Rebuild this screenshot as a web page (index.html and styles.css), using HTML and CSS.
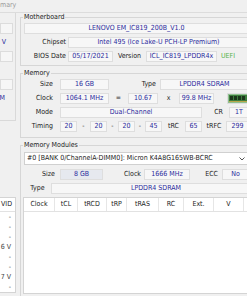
FILE: index.html
```html
<!DOCTYPE html>
<html lang="en">
<head>
    <meta charset="UTF-8">
    <meta name="viewport" content="width=device-width, initial-scale=1.0">
    <title>System Summary</title>
    <link rel="stylesheet" href="styles.css">
</head>
<body>
    <div class="titlebar">
        <div class="title">mary</div>
    </div>

    <div class="page">
        <!-- cpu side, mostly cut off -->
        <div class="side">
            <div class="side-group">
                <div class="side-row"><div class="side-box"></div></div>
                <div class="side-row"><span class="side-val">V</span></div>
                <div class="side-row"><div class="side-box"></div></div>
                <div class="side-row"></div>
                <div class="side-row"><div class="side-box"></div></div>
                <div class="side-row"><span class="side-val end">M</span></div>
            </div>
            <div class="side-lower">
                <div class="side-list">
                    <div class="side-head">VID</div>
                    <div class="side-cell">-</div>
                    <div class="side-cell">-</div>
                    <div class="side-cell">-</div>
                    <div class="side-cell">6 V</div>
                    <div class="side-cell">-</div>
                    <div class="side-cell">-</div>
                    <div class="side-cell">7 V</div>
                    <div class="side-cell">-</div>
                </div>
            </div>
        </div>

        <div class="main">
            <fieldset class="group">
                <legend>Motherboard</legend>
                <div class="rows">
                    <div class="row">
                        <div class="box grow">LENOVO EM_IC819_200B_V1.0</div>
                    </div>
                    <div class="row">
                        <div class="lbl mb-lbl">Chipset</div>
                        <div class="box grow">Intel 495 (Ice Lake-U PCH-LP Premium)</div>
                    </div>
                    <div class="row">
                        <div class="lbl mb-lbl">BIOS Date</div>
                        <div class="box w45">05/17/2021</div>
                        <div class="lbl version">Version</div>
                        <div class="box w71">ICL_IC819_LPDDR4x</div>
                        <div class="uefi">UEFI</div>
                    </div>
                </div>
            </fieldset>

            <fieldset class="group memory">
                <legend>Memory</legend>
                <div class="rows">
                    <div class="row">
                        <div class="lbl mem-lbl">Size</div>
                        <div class="box w49">16 GB</div>
                        <div class="lbl type-lbl">Type</div>
                        <div class="box grow">LPDDR4 SDRAM</div>
                    </div>
                    <div class="row">
                        <div class="lbl mem-lbl">Clock</div>
                        <div class="box w49">1064.1 MHz</div>
                        <div class="sym eq">=</div>
                        <div class="box w30">10.67</div>
                        <div class="sym times">x</div>
                        <div class="box w35">99.8 MHz</div>
                        <div class="chip">
                            <svg width="20" height="9" viewBox="0 0 20 9">
                                <rect x="0.5" y="0.5" width="19" height="8" fill="#3d7d3d" stroke="#8fbf8f"/>
                                <rect x="2" y="2" width="3" height="4" fill="#1c361c"/>
                                <rect x="6" y="2" width="3" height="4" fill="#1c361c"/>
                                <rect x="10" y="2" width="3" height="4" fill="#1c361c"/>
                                <rect x="14" y="2" width="3" height="4" fill="#1c361c"/>
                                <rect x="1" y="7" width="18" height="1" fill="#b9a64a"/>
                            </svg>
                        </div>
                    </div>
                    <div class="row">
                        <div class="lbl mem-lbl">Mode</div>
                        <div class="box w142">Dual-Channel</div>
                        <div class="lbl cr">CR</div>
                        <div class="box grow">1T</div>
                    </div>
                    <div class="row">
                        <div class="lbl mem-lbl">Timing</div>
                        <div class="box w17">20</div>
                        <div class="sym d13">-</div>
                        <div class="box w17">20</div>
                        <div class="sym d11">-</div>
                        <div class="box w17">20</div>
                        <div class="sym d10">-</div>
                        <div class="box w17">45</div>
                        <div class="lbl trc">tRC</div>
                        <div class="box w17">65</div>
                        <div class="lbl trfc">tRFC</div>
                        <div class="box grow">299</div>
                    </div>
                </div>
            </fieldset>

            <fieldset class="group modules">
                <legend>Memory Modules</legend>
                <div class="select">
                    <span>#0 [BANK 0/ChannelA-DIMM0]: Micron K4A8G165WB-BCRC</span>
                    <svg width="6" height="4" viewBox="0 0 6 4"><polyline points="0.5,0.5 3,3 5.5,0.5" fill="none" stroke="#555" stroke-width="1"/></svg>
                </div>
                <div class="rows mod-rows">
                    <div class="row">
                        <div class="lbl mod-lbl">Size</div>
                        <div class="box w43 shade">8 GB</div>
                        <div class="lbl clock-lbl">Clock</div>
                        <div class="box w46">1666 MHz</div>
                        <div class="lbl ecc">ECC</div>
                        <div class="box grow">No</div>
                    </div>
                    <div class="row">
                        <div class="lbl mod-type">Type</div>
                        <div class="box grow shift">LPDDR4 SDRAM</div>
                    </div>
                </div>
                <div class="list">
                    <div class="list-head">
                        <div class="col c-clock">Clock</div>
                        <div class="col c-tcl">tCL</div>
                        <div class="col c-trcd">tRCD</div>
                        <div class="col c-trp">tRP</div>
                        <div class="col c-tras">tRAS</div>
                        <div class="col c-rc">RC</div>
                        <div class="col c-ext">Ext.</div>
                        <div class="col c-v">V</div>
                    </div>
                </div>
            </fieldset>
        </div>
    </div>
</body>
</html>
```

FILE: styles.css
```css
/* General Styles */
* {
    box-sizing: border-box;
}

body {
    margin: 0;
    width: 247px;
    height: 296px;
    overflow: hidden;
    background-color: #f0f0f0;
    color: #222;
    font-family: "DejaVu Sans Condensed", "DejaVu Sans", sans-serif;
    font-stretch: condensed;
    font-size: 7px;
    line-height: 9px;
}

.titlebar {
    height: 13px;
    border-bottom: 1px solid #dcdcdc;
}

.title {
    color: #9a9a9a;
    white-space: nowrap;
    padding-top: 1px;
}

.page {
    display: flex;
    gap: 3px;
    width: 260px;
}

/* left panel */
.side {
    width: 17px;
    flex: none;
    overflow: hidden;
    display: flex;
    flex-direction: column;
}

.side-group {
    width: 16px;
    height: 108px;
    border-right: 1px solid #d9d9d9;
    border-bottom: 1px solid #d9d9d9;
    padding: 10px 2px 0 0;
    display: flex;
    flex-direction: column;
    gap: 3px;
}

.side-row {
    height: 11px;
    display: flex;
    justify-content: flex-end;
}

.side-box {
    width: 14px;
    height: 11px;
    border: 1px solid #dcdcdc;
    background-color: #f6f6f6;
}

.side-val {
    color: #2a2a9c;
    line-height: 11px;
    padding-right: 7px;
}

.side-val.end {
    padding-right: 8px;
}

.side-lower {
    flex: 1;
    width: 16px;
    padding-top: 76px;
}

.side-list {
    height: 96px;
    background-color: #fff;
    border: 1px solid #d4d4d4;
    border-left: none;
}

.side-head {
    height: 14px;
    line-height: 12px;
    text-align: right;
    padding-right: 3px;
    border-bottom: 1px solid #e2e2e2;
}

.side-cell {
    height: 10px;
    line-height: 10px;
    text-align: right;
    padding-right: 4px;
    color: #444;
}

/* main panel */
.main {
    width: 232px;
    flex: none;
}

.group {
    margin: 0;
    min-width: 0;
    border: 1px solid #d6d6d6;
    padding: 1px 2px 3px 3px;
}

.group legend {
    padding: 0 1px;
    margin-left: -1px;
    line-height: 9px;
}

.memory {
    margin-top: 3px;
    padding-bottom: 5px;
}

.modules {
    margin-top: 3px;
    padding-top: 2px;
    height: 160px;
}

.rows {
    display: flex;
    flex-direction: column;
    gap: 3px;
}

.row {
    display: flex;
    height: 11px;
}

.box {
    flex: none;
    height: 11px;
    border: 1px solid #dedede;
    background-color: #f7f7f7;
    color: #2a2a9c;
    text-align: center;
    line-height: 9px;
    white-space: nowrap;
    overflow: hidden;
}

.box.grow {
    flex: 1;
}

.box.shade {
    background-color: #e6e9ef;
}

.box.shift {
    padding-left: 12px;
}

.w17 { width: 17px; }
.w30 { width: 30px; }
.w35 { width: 35px; }
.w43 { width: 43px; }
.w45 { width: 45px; }
.w46 { width: 46px; }
.w49 { width: 49px; }
.w71 { width: 71px; }
.w142 { width: 142px; }

.lbl {
    flex: none;
    line-height: 11px;
    text-align: right;
    white-space: nowrap;
}

.mb-lbl { width: 44px; padding-right: 2px; }
.version { width: 33px; padding-right: 5px; }
.mem-lbl { width: 36px; padding-right: 7px; }
.type-lbl { width: 51px; padding-right: 4px; }
.cr { width: 27px; padding-right: 6px; }
.trc { width: 23px; text-align: center; }
.trfc { width: 24px; text-align: center; }
.mod-lbl { width: 36px; padding-right: 5px; }
.clock-lbl { width: 41px; padding-right: 3px; }
.ecc { width: 32px; padding-right: 4px; }
.mod-type { width: 27px; text-align: center; }

.uefi {
    color: #55b34a;
    line-height: 11px;
    padding-left: 4px;
}

.sym {
    flex: none;
    text-align: center;
    line-height: 11px;
    color: #333;
}

.eq { width: 19px; }
.times { width: 21px; }
.d13 { width: 13px; }
.d11 { width: 11px; }
.d10 { width: 10px; }

.chip {
    flex: none;
    width: 22px;
    height: 11px;
    margin-left: 13px;
    border: 1px solid #dedede;
    background-color: #f7f7f7;
    display: flex;
}

.chip svg {
    display: block;
}

.select {
    height: 13px;
    border: 1px solid #d0d0d0;
    background-color: #fff;
    display: flex;
    align-items: center;
    justify-content: space-between;
    padding: 0 3px 0 2px;
    white-space: nowrap;
}

.mod-rows {
    margin-top: 4px;
}

.list {
    margin-top: 3px;
    margin-left: -1px;
    height: 97px;
    background-color: #fff;
    border: 1px solid #d4d4d4;
}

.list-head {
    display: flex;
    height: 14px;
    border-bottom: 1px solid #e2e2e2;
}

.col {
    flex: none;
    text-align: center;
    line-height: 12px;
    border-right: 1px solid #e6e6e6;
}

.c-clock { width: 31px; }
.c-tcl { width: 23px; }
.c-trcd { width: 29px; }
.c-trp { width: 20px; }
.c-tras { width: 32px; }
.c-rc { width: 25px; }
.c-ext { width: 30px; }
.c-v { width: 30px; }
```
